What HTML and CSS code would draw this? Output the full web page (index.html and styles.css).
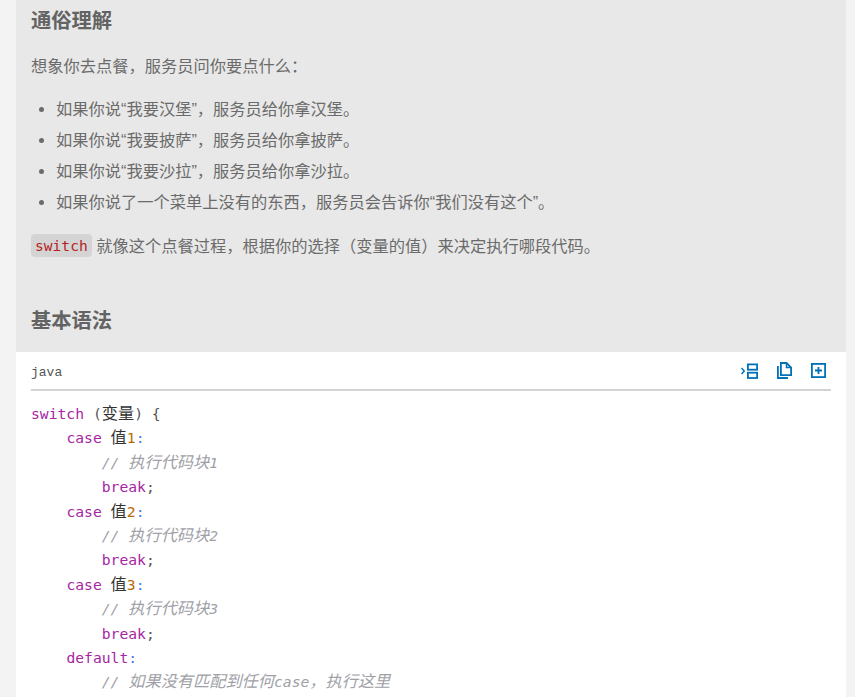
FILE: index.html
```html
<!DOCTYPE html>
<html lang="zh">
<head>
<meta charset="utf-8">
<title>switch</title>
<link rel="stylesheet" href="styles.css">
</head>
<body>
<main class="page">
  <article class="article">
    <h3 class="heading heading-first">通俗理解</h3>
    <p class="para para-intro">想象你去点餐&#xFF0C;服务员问你要点什么&#xFF1A;</p>
    <ul class="list">
      <li>如果你说“我要汉堡”&#xFF0C;服务员给你拿汉堡。</li>
      <li>如果你说“我要披萨”&#xFF0C;服务员给你拿披萨。</li>
      <li>如果你说“我要沙拉”&#xFF0C;服务员给你拿沙拉。</li>
      <li>如果你说了一个菜单上没有的东西&#xFF0C;服务员会告诉你“我们没有这个”。</li>
    </ul>
    <p class="para"><code class="inline-code">switch</code> 就像这个点餐过程&#xFF0C;根据你的选择&#xFF08;变量的值&#xFF09;来决定执行哪段代码。</p>
    <h3 class="heading heading-second">基本语法</h3>
    <section class="code-block">
      <header class="code-head">
        <span class="code-lang">java</span>
        <div class="code-tools">
          <svg class="tool" width="17" height="16" viewBox="0 0 17 16"><path class="tool-thin" d="M.5 5 3.200 8 .5 11"/><rect x="6.9" y="1.4" width="9.200" height="5.300"/><rect x="6.9" y="9.700" width="9.200" height="5.300"/></svg>
          <svg class="tool" width="15" height="17" viewBox="0 0 15 17"><path d="M.9 4v12h10"/><path d="M3.9 1h5.6l4.6 4.600v7.600h-10.200z"/><path class="tool-thin" d="M9.500 1v4.600h4.600"/></svg>
          <svg class="tool" width="15" height="15" viewBox="0 0 15 15"><rect x=".9" y=".9" width="13.200" height="13.200"/><path d="M7.500 4v7M4 7.500h7"/></svg>
        </div>
      </header>
<pre class="code"><span class="kw">switch</span> (<span class="cjk">变量</span>) {
    <span class="kw">case</span> <span class="cjk">值</span><span class="num">1</span><span class="punc">:</span>
        <span class="com">// <span class="cjk">执行代码块</span>1</span>
        <span class="kw">break</span>;
    <span class="kw">case</span> <span class="cjk">值</span><span class="num">2</span><span class="punc">:</span>
        <span class="com">// <span class="cjk">执行代码块</span>2</span>
        <span class="kw">break</span>;
    <span class="kw">case</span> <span class="cjk">值</span><span class="num">3</span><span class="punc">:</span>
        <span class="com">// <span class="cjk">执行代码块</span>3</span>
        <span class="kw">break</span>;
    <span class="kw">default</span><span class="punc">:</span>
        <span class="com">// <span class="cjk">如果没有匹配到任何</span>case<span class="cjk">&#xFF0C;执行这里</span></span>
}</pre>
    </section>
  </article>
</main>
</body>
</html>
```
FILE: styles.css
```css
html, body {
  margin: 0;
  height: 697px;
  overflow: hidden;
  background: #f3f3f3;
}
.page {
  padding: 0 9px 0 16px;
}
.article {
  background: #e8e8e8;
  padding: 0 15px;
  color: #6b6b6b;
  font-family: "Liberation Sans", "Noto Sans CJK SC", sans-serif;
  font-size: 16.25px;
  line-height: 31px;
}
.heading {
  margin: 0;
  font-size: 20.3px;
  font-weight: 700;
  line-height: 30px;
  color: #636363;
}
.heading-first {
  padding-top: 6px;
  margin-bottom: 15px;
}
.heading-second {
  margin-top: 44px;
  margin-bottom: 16px;
}
.para {
  margin: 0 0 16px;
}
.para-intro {
  margin-bottom: 12px;
}
.list {
  margin: 0 0 12px;
  padding: 0 0 0 25px;
}
.inline-code {
  font-family: "DejaVu Sans Mono", monospace;
  font-size: 14.6px;
  color: #b22222;
  background: #d4d4d4;
  border-radius: 4px;
  padding: 3px 4px;
  vertical-align: 1px;
}
.code-block {
  background: #fff;
  margin: 0 -15px;
  padding: 0 15px;
}
.code-head {
  display: flex;
  align-items: center;
  justify-content: space-between;
  height: 37px;
  border-bottom: 2px solid #d3d3d3;
}
.code-lang {
  position: relative;
  top: 2px;
  font-family: "Liberation Mono", monospace;
  font-size: 13px;
  color: #555;
}
.code-tools {
  display: flex;
  align-items: center;
  gap: 19px;
  padding-right: 5px;
}
.tool {
  fill: none;
  stroke: #0070b8;
  stroke-width: 1.8;
}
.tool-thin {
  stroke-width: 1.5;
}
.code {
  margin: 0;
  padding: 11px 0;
  font-family: "DejaVu Sans Mono", monospace;
  font-size: 14.7px;
  line-height: 24.4px;
  color: #555;
}
.kw { color: #a626a4; }
.num { color: #b76b01; }
.punc { color: #4078f2; }
.com { color: #a0a1a7; font-style: italic; }
.cjk {
  font-family: "Noto Sans CJK SC", sans-serif;
  font-size: 16.2px;
  line-height: 0;
}
.code > .cjk { color: #333; }
```
